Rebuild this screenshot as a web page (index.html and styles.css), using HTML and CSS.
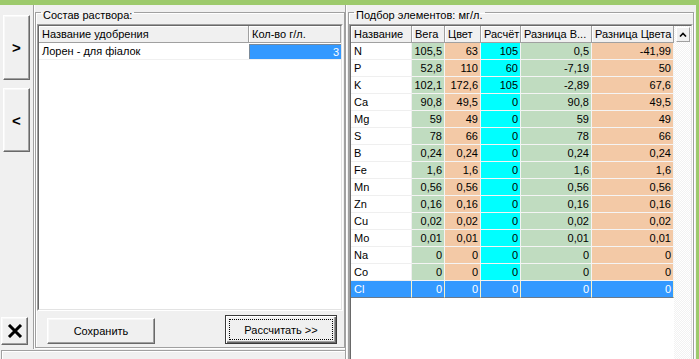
FILE: index.html
```html
<!DOCTYPE html>
<html lang="ru">
<head>
<meta charset="utf-8">
<title>Подбор раствора</title>
<link rel="stylesheet" href="styles.css">
</head>
<body>
<div class="app">
  <div class="topbar"></div>
  <div class="main">
    <div class="leftside">
      <div class="upper">
        <div class="tools">
          <div class="btn tool tool-add">&gt;</div>
          <div class="btn tool tool-remove">&lt;</div>
          <div class="btn tool-clear">
            <svg width="16" height="14" viewBox="0 0 16 14"><path d="M2 1 L14 13 M14 1 L2 13" stroke="#000" stroke-width="3" fill="none"/></svg>
          </div>
        </div>
        <div class="leftpanel">
          <fieldset class="group group-left">
            <legend>Состав раствора:</legend>
            <div class="frame">
              <div class="listbox">
                <div class="lb-row">
                  <div class="lb-h lb-name">Название удобрения</div>
                  <div class="lb-h lb-qty">Кол-во г/л.</div>
                </div>
                <div class="lb-row">
                  <div class="lb-c lb-name">Лорен - для фіалок</div>
                  <div class="lb-c lb-qty"><span class="lb-edit">3</span></div>
                </div>
              </div>
            </div>
            <div class="actions">
              <div class="btn btn-save">Сохранить</div>
              <div class="btn btn-default"><span class="focus">Рассчитать &gt;&gt;</span></div>
            </div>
          </fieldset>
        </div>
      </div>
      <div class="lower"></div>
    </div>
    <div class="rightside">
      <fieldset class="group group-right">
        <legend>Подбор элементов: мг/л.</legend>
        <div class="frame frame-grid">
          <div class="grid">
            <div class="table">
              <div class="h">Название</div><div class="h">Вега</div><div class="h">Цвет</div><div class="h">Расчёт</div><div class="h">Разница В...</div><div class="h">Разница Цвета</div>

              <div class="c nm">N</div><div class="c g">105,5</div><div class="c o">63</div><div class="c a">105</div><div class="c g">0,5</div><div class="c o">-41,99</div>
              <div class="c nm">P</div><div class="c g">52,8</div><div class="c o">110</div><div class="c a">60</div><div class="c g">-7,19</div><div class="c o">50</div>
              <div class="c nm">K</div><div class="c g">102,1</div><div class="c o">172,6</div><div class="c a">105</div><div class="c g">-2,89</div><div class="c o">67,6</div>
              <div class="c nm">Ca</div><div class="c g">90,8</div><div class="c o">49,5</div><div class="c a">0</div><div class="c g">90,8</div><div class="c o">49,5</div>
              <div class="c nm">Mg</div><div class="c g">59</div><div class="c o">49</div><div class="c a">0</div><div class="c g">59</div><div class="c o">49</div>
              <div class="c nm">S</div><div class="c g">78</div><div class="c o">66</div><div class="c a">0</div><div class="c g">78</div><div class="c o">66</div>
              <div class="c nm">B</div><div class="c g">0,24</div><div class="c o">0,24</div><div class="c a">0</div><div class="c g">0,24</div><div class="c o">0,24</div>
              <div class="c nm">Fe</div><div class="c g">1,6</div><div class="c o">1,6</div><div class="c a">0</div><div class="c g">1,6</div><div class="c o">1,6</div>
              <div class="c nm">Mn</div><div class="c g">0,56</div><div class="c o">0,56</div><div class="c a">0</div><div class="c g">0,56</div><div class="c o">0,56</div>
              <div class="c nm">Zn</div><div class="c g">0,16</div><div class="c o">0,16</div><div class="c a">0</div><div class="c g">0,16</div><div class="c o">0,16</div>
              <div class="c nm">Cu</div><div class="c g">0,02</div><div class="c o">0,02</div><div class="c a">0</div><div class="c g">0,02</div><div class="c o">0,02</div>
              <div class="c nm">Mo</div><div class="c g">0,01</div><div class="c o">0,01</div><div class="c a">0</div><div class="c g">0,01</div><div class="c o">0,01</div>
              <div class="c nm">Na</div><div class="c g">0</div><div class="c o">0</div><div class="c a">0</div><div class="c g">0</div><div class="c o">0</div>
              <div class="c nm">Co</div><div class="c g">0</div><div class="c o">0</div><div class="c a">0</div><div class="c g">0</div><div class="c o">0</div>
              <div class="c nm sel">Cl</div><div class="c sel">0</div><div class="c sel">0</div><div class="c sel">0</div><div class="c sel">0</div><div class="c sel">0</div>
            </div>
            <div class="vscroll">
              <div class="sb-up">
                <svg width="8" height="5" viewBox="0 0 8 5"><path d="M1 4.5 L4 1.5 L7 4.5" stroke="#000" stroke-width="1.6" fill="none"/></svg>
              </div>
            </div>
          </div>
        </div>
      </fieldset>
    </div>
  </div>
</div>
</body>
</html>
```

FILE: styles.css
```css
* { box-sizing: border-box; }

html, body {
  margin: 0;
  padding: 0;
}

body {
  width: 699px;
  height: 359px;
  overflow: hidden;
  background: #f0f0f0;
  font-family: "Liberation Sans", Arial, sans-serif;
  font-size: 11px;
  color: #000;
}

.app {
  width: 699px;
  height: 359px;
  display: flex;
  flex-direction: column;
}

.topbar {
  height: 5px;
  flex: none;
  background: #9dca6c;
}

.main {
  flex: 1;
  display: flex;
  min-height: 0;
  border-right: 3px solid #9dca6c;
}

/* ---------- left side ---------- */
.leftside {
  width: 345px;
  flex: none;
  display: flex;
  flex-direction: column;
}

.upper {
  height: 344px;
  display: flex;
}

.lower {
  flex: 1;
  margin: 1px 0 0 1px;
  border-top: 1px solid #a0a0a0;
  border-left: 1px solid #a0a0a0;
  box-shadow: inset 1px 1px #fff;
}

.tools {
  width: 33px;
  flex: none;
  display: flex;
  flex-direction: column;
}

.btn {
  background: #f0f0f0;
  border: 1px solid;
  border-color: #fff #696969 #696969 #fff;
  box-shadow: inset -1px -1px #a0a0a0, inset 1px 1px #f8f8f8;
  display: flex;
  align-items: center;
  justify-content: center;
  white-space: nowrap;
}

.tool {
  width: 27px;
  margin-left: 3px;
  font-size: 15px;
  font-weight: bold;
}

.tool-add {
  margin-top: 10px;
  height: 65px;
}

.tool-remove {
  margin-top: 8px;
  height: 64px;
}

.tool-clear {
  margin: auto 0 4px 1px;
  width: 27px;
  height: 28px;
}

.leftpanel {
  width: 312px;
  flex: none;
  border-left: 1px solid #a0a0a0;
  box-shadow: inset 1px 0 #fff;
  display: flex;
}

.group {
  min-width: 0;
  border: 1px solid #a0a0a0;
  box-shadow: inset 1px 1px #fff, 1px 1px #fff;
  margin: -2px 0 0 0;
}

.group legend {
  padding: 6px 2px 0;
  line-height: 13px;
  font-size: 11px;
}

.group-left {
  margin-left: 1px;
  width: 310px;
  height: 345px;
  padding: 2px 1px 3px;
  display: flex;
  flex-direction: column;
}

.group-left legend {
  margin-left: 4px;
}

.frame {
  border: 1px solid;
  border-color: #a0a0a0 #fff #fff #a0a0a0;
}

.listbox {
  height: 285px;
  border: 1px solid;
  border-color: #696969 #e3e3e3 #e3e3e3 #696969;
  background: #fff;
}

.lb-row {
  display: flex;
  height: 17px;
}

.lb-name { width: 210px; }
.lb-qty { width: 92px; }

.lb-h {
  background: #f0f0f0;
  border-right: 1px solid #a0a0a0;
  border-bottom: 1px solid #a0a0a0;
  box-shadow: inset 1px 1px #fff;
  padding-left: 3px;
  line-height: 16px;
  white-space: nowrap;
}

.lb-c {
  line-height: 16px;
  padding-left: 3px;
  white-space: nowrap;
  border-bottom: 1px solid #f0f0f0;
}

.lb-c.lb-qty {
  padding: 1px 0 0 0;
  display: flex;
}

.lb-edit {
  flex: 1;
  background: #3399ff;
  color: #fff;
  border-top: 1px solid #7a8a9a;
  border-left: 1px solid #7a8a9a;
  text-align: right;
  padding-right: 2px;
  line-height: 14px;
  height: 15px;
}

.actions {
  margin-top: 4px;
  height: 29px;
  display: flex;
  align-items: center;
  justify-content: space-between;
  padding: 0 6px 0 10px;
}

.btn-save {
  width: 108px;
  height: 26px;
  margin-top: 2px;
}

.btn-default {
  width: 112px;
  height: 29px;
  border: 1px solid #3a3a3a;
  box-shadow: inset 1px 1px #fff, inset -1px -1px #696969, inset -2px -2px #a0a0a0;
  padding: 3px;
  align-items: stretch;
}

.focus {
  flex: 1;
  border: 1px dotted #000;
  display: flex;
  align-items: center;
  justify-content: center;
}

/* ---------- right side ---------- */
.rightside {
  flex: 1;
  min-width: 0;
  border-left: 1px solid #a0a0a0;
  box-shadow: inset 1px 0 #fff;
  display: flex;
}

.group-right {
  margin-left: 2px;
  margin-right: 2px;
  flex: 1;
  height: 356px;
  padding: 2px 0 0 0;
  border-bottom: 0;
  display: flex;
  flex-direction: column;
}

.group-right legend {
  margin-left: 5px;
}

.frame-grid {
  flex: 1;
  border-bottom: 0;
}

.grid {
  height: 100%;
  border: 1px solid;
  border-bottom: 0;
  border-color: #696969 #e3e3e3 #e3e3e3 #696969;
  background: #fff;
  display: flex;
}

.table {
  width: 323px;
  flex: none;
  display: grid;
  grid-template-columns: 61px 33px 36px 40px 71px 82px;
  grid-auto-rows: 17px;
  align-content: start;
  background: #fff;
}

.h {
  background: #f0f0f0;
  border-right: 1px solid #a0a0a0;
  border-bottom: 1px solid #a0a0a0;
  box-shadow: inset 1px 1px #fff;
  padding-left: 3px;
  line-height: 16px;
  white-space: nowrap;
  overflow: hidden;
}

.c {
  border-right: 1px solid #f4f4f4;
  border-bottom: 1px solid #f4f4f4;
  line-height: 16px;
  padding: 0 2px 0 0;
  text-align: right;
  white-space: nowrap;
  overflow: hidden;
}

.c.nm {
  text-align: left;
  padding: 0 0 0 3px;
  border-color: #efefef;
}

.g { background: #c0dcc0; }
.o { background: #f3c9a6; }
.a { background: #00ffff; }

.c.sel {
  background: #3399ff;
  color: #fff;
  border-right-color: #f6f0c8;
  border-bottom: 1px solid #6a7a8c;
}

.vscroll {
  flex: 1;
  background: repeating-conic-gradient(#f2f2f2 0 25%, #fff 0 50%) 0 0 / 2px 2px;
  padding: 1px 1px 0 2px;
}

.sb-up {
  width: 14px;
  height: 15px;
  background: #f0f0f0;
  border: 1px solid;
  border-color: #fff #a0a0a0 #a0a0a0 #fff;
  display: flex;
  align-items: center;
  justify-content: center;
}
```
